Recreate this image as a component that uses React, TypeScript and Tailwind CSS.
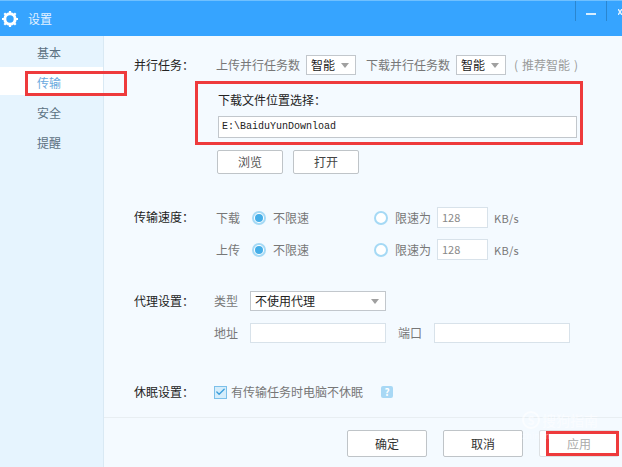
import { Check } from "lucide-react";

const labelFont = "text-[12px] leading-[20px] whitespace-nowrap";

const Arrow = () => (
  <span className="w-0 h-0 border-x-[4px] border-x-transparent border-t-[5px] border-t-[#a0a0a0]" />
);

const Radio = ({ on }: { on?: boolean }) => (
  <span className="w-[14px] h-[14px] rounded-full border-2 border-[#a5d9f5] bg-white flex items-center justify-center shrink-0">
    {on && <span className="w-[8px] h-[8px] rounded-full bg-[#45aee8]" />}
  </span>
);

const Select = ({ text, className }: { text: string; className: string }) => (
  <div className={`h-[20px] border border-[#c2c7cc] bg-white flex items-center justify-between pl-[4px] pr-[6px] text-[#222] ${labelFont} ${className}`}>
    <span>{text}</span>
    <Arrow />
  </div>
);

const Btn = ({ text, className }: { text: string; className: string }) => (
  <button className={`border border-[#bfc4c8] rounded-[2px] bg-white text-[12px] ${className}`}>{text}</button>
);

const SpeedRow = ({ name, className }: { name: string; className?: string }) => (
  <div className={`flex items-center h-[21px] text-[#777] ${labelFont} ${className ?? ""}`}>
    <span className="w-[36px]">{name}</span>
    <Radio on />
    <span className="ml-[7px] w-[101px]">不限速</span>
    <Radio />
    <span className="ml-[7px] w-[42px]">限速为</span>
    <div className="w-[51px] h-[21px] border border-[#d8e2ea] bg-white pl-[4px] text-[11px] leading-[18px] text-[#888]">128</div>
    <span className="ml-[6px] text-[11px] tracking-[0.3px]">KB/s</span>
  </div>
);

export default function App() {
  return (
    <div
      className="relative w-[622px] h-[467px] overflow-hidden bg-[#f4faff] flex flex-col"
      style={{ fontFamily: '"Noto Sans CJK SC", "Liberation Sans", sans-serif' }}
    >
      {/* title bar */}
      <div className="h-[36px] shrink-0 bg-[#36a4ff] border-t border-[#6fc0ff] flex items-center text-white">
        <svg width="20" height="20" viewBox="0 0 20 20">
          <circle cx="10" cy="10" r="5.200" fill="none" stroke="#fff" strokeWidth="3" />
          <path d="M10 2v2M10 16v2M2 10h2M16 10h2M4.300 4.300l1.500 1.500M14.200 14.200l1.500 1.500M4.300 15.700l1.500-1.500M14.200 5.800l1.500-1.500" stroke="#fff" strokeWidth="2.200" />
        </svg>
        <span className="ml-[8px] text-[12px] text-[#e3f2ff]">设置</span>
        <div className="ml-auto flex h-[20px] self-start">
          <div className="w-[32px] border-x border-[#2a86d0] flex items-center justify-center pt-[6px]">
            <span className="w-[10px] h-[2px] bg-[#d8eeff]" />
          </div>
          <div className="w-[15px] pl-[11px] pt-[8px]">
            <svg width="4" height="6" viewBox="0 0 4 6">
              <path d="M0 0l4 6M0 6l4-6" stroke="#e3f2ff" strokeWidth="1.400" />
            </svg>
          </div>
        </div>
      </div>

      <div className="flex flex-1 min-h-0">
        {/* side nav */}
        <div className="w-[104px] shrink-0 bg-[#e6f4fe] border-r border-[#d9e9f4] text-[12px] text-[#5b7081]">
          <div className="h-[31px] pl-[37px] leading-[34px]">基本</div>
          <div className="h-[28px] pl-[37px] leading-[32px] bg-white text-[#6aa9de]">传输</div>
          <div className="h-[30px] pl-[37px] leading-[35px]">安全</div>
          <div className="h-[30px] pl-[37px] leading-[36px]">提醒</div>
        </div>

        <div className="flex-1 min-w-0 flex flex-col">
          {/* settings */}
          <div className="flex-1 pl-[30px] pt-[19px]">
            <div className="flex items-center h-[20px]">
              <span className={`w-[82px] text-[#222] ${labelFont}`}>并行任务：</span>
              <span className={`w-[90px] text-[#777] ${labelFont}`}>上传并行任务数</span>
              <Select text="智能" className="w-[50px]" />
              <span className={`ml-[10px] w-[90px] text-[#777] ${labelFont}`}>下载并行任务数</span>
              <Select text="智能" className="w-[50px]" />
              <span className={`ml-[8px] flex gap-[4px] text-[#9a9a9a] ${labelFont}`}>
                <span>(</span>
                <span>推荐智能</span>
                <span>)</span>
              </span>
            </div>

            <div className={`ml-[84px] mt-[15px] text-[#222] ${labelFont}`}>下载文件位置选择：</div>
            <div className="ml-[84px] mt-[6px] w-[359px] h-[22px] border border-[#c2c7cc] bg-white pl-[3px] text-[10px] leading-[19px] text-[#222]" style={{ fontFamily: '"Liberation Mono", monospace' }}>
              E:\BaiduYunDownload
            </div>
            <div className="ml-[83px] mt-[12px] flex gap-[10px]">
              <Btn text="浏览" className="w-[66px] h-[24px] text-[#555]" />
              <Btn text="打开" className="w-[66px] h-[24px] text-[#444]" />
            </div>

            <div className="mt-[33px] flex">
              <span className={`w-[82px] text-[#222] ${labelFont}`}>传输速度：</span>
              <div>
                <SpeedRow name="下载" />
                <SpeedRow name="上传" className="mt-[11px]" />
              </div>
            </div>

            <div className="mt-[31px] flex">
              <span className={`w-[80px] text-[#222] ${labelFont}`}>代理设置：</span>
              <div>
                <div className="flex items-center h-[20px]">
                  <span className={`w-[36px] text-[#777] ${labelFont}`}>类型</span>
                  <Select text="不使用代理" className="w-[136px]" />
                </div>
                <div className="flex items-center h-[20px] mt-[12px]">
                  <span className={`w-[36px] text-[#777] ${labelFont}`}>地址</span>
                  <div className="w-[136px] h-[20px] border border-[#d8e2ea] bg-white" />
                  <span className={`ml-[12px] w-[36px] text-[#777] ${labelFont}`}>端口</span>
                  <div className="w-[136px] h-[20px] border border-[#d8e2ea] bg-white" />
                </div>
              </div>
            </div>

            <div className="mt-[39px] flex items-center h-[20px]">
              <span className={`w-[80px] text-[#222] ${labelFont}`}>休眠设置：</span>
              <span className="w-[13px] h-[13px] border border-[#7cc0ea] bg-[#d5edfb] flex items-center justify-center">
                <Check size={12} strokeWidth={3} className="text-[#3d9fdc]" />
              </span>
              <span className={`ml-[4px] w-[150px] text-[#777] ${labelFont}`}>有传输任务时电脑不休眠</span>
              <span className="w-[12px] h-[12px] rounded-[2px] bg-[#a8d8f5] text-white text-[10px] leading-[12px] text-center font-bold">?</span>
            </div>
          </div>

          {/* footer */}
          <div className="h-[50px] shrink-0 border-t border-[#e8eef2] flex items-start pt-[12px] pl-[243px] gap-[16px]">
            <Btn text="确定" className="w-[80px] h-[27px] text-[#333]" />
            <Btn text="取消" className="w-[80px] h-[27px] text-[#333]" />
            <Btn text="应用" className="w-[80px] h-[27px] text-[#aaa] border-[#dde1e4]" />
          </div>
        </div>
      </div>

      {/* red annotations */}
      <div className="absolute left-[25px] top-[71px] w-[102px] h-[25px] border-[3px] border-[#ee3a3c]" />
      <div className="absolute left-[195px] top-[81px] w-[388px] h-[64px] border-[3px] border-[#ee3a3c]" />
      <div className="absolute left-[546px] top-[431px] w-[73px] h-[25px] border-[3px] border-[#ee3a3c]" />

      {/* watermark */}
      <div className="absolute left-[522px] top-[411px] flex items-center gap-[2px] text-[14px] leading-[18px] text-white/60">
        <span className="w-[18px] h-[18px] rounded-full border-2 border-white/60 text-[11px] leading-[14px] text-center font-bold">S</span>
        <span>搜狗指南</span>
      </div>
      <div className="absolute left-[522px] top-[431px] text-[9px] leading-[10px] text-white/40">zhinan.sogou.com</div>
    </div>
  );
}
